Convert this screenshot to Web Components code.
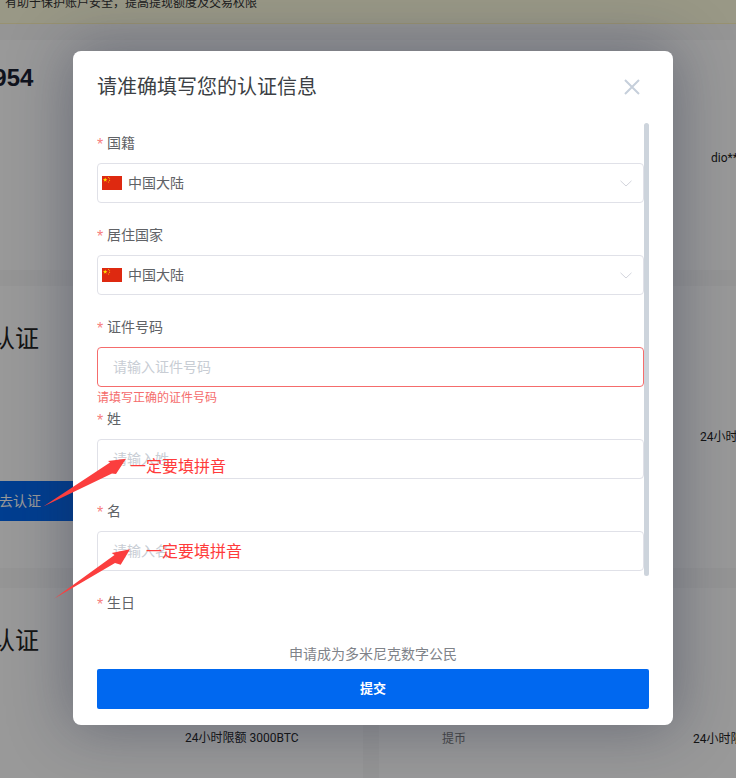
<!DOCTYPE html>
<html lang="zh-CN">
<head>
<meta charset="utf-8">
<title>认证信息</title>
<style>
html,body{margin:0;padding:0;background:#fff}
body{font-family:"Noto Sans CJK SC","Liberation Sans",sans-serif}
</style>
</head>
<body>
<kyc-page>
  <bg-banner slot="bg">有助于保护账户安全，提高提现额度及交易权限</bg-banner>
  <bg-rows slot="bg"></bg-rows>
  <kyc-modal slot="modal" heading="请准确填写您的认证信息">
    <form-field label="国籍"><flag-select value="中国大陆"></flag-select></form-field>
    <form-field label="居住国家"><flag-select value="中国大陆"></flag-select></form-field>
    <form-field label="证件号码" error="请填写正确的证件号码"><text-box placeholder="请输入证件号码" invalid></text-box></form-field>
    <form-field label="姓"><text-box placeholder="请输入姓"></text-box></form-field>
    <form-field label="名"><text-box placeholder="请输入名"></text-box></form-field>
    <form-field label="生日"></form-field>
    <span slot="note">申请成为多米尼克数字公民</span>
    <span slot="submit">提交</span>
  </kyc-modal>
  <red-note slot="marks" style="left:130px;top:453px">一定要填拼音</red-note>
  <red-note slot="marks" style="left:146px;top:538px">一定要填拼音</red-note>
  <red-arrows slot="marks"></red-arrows>
</kyc-page>
<script>
function make(name, html){
  customElements.define(name, class extends HTMLElement{
    constructor(){
      super();
      this.attachShadow({mode:'open'}).innerHTML = typeof html==='function' ? html(this) : html;
    }
    connectedCallback(){
      if(typeof html==='function') this.shadowRoot.innerHTML = html(this);
    }
  });
}
make('kyc-page', `<style>
:host{display:block;position:relative;width:736px;height:778px;overflow:hidden;background:#f8f8f9}
.scrim{position:absolute;inset:0;background:rgba(0,0,0,.4);display:flex;align-items:flex-start;padding:51px 63px 0 73px;box-sizing:border-box}
</style>
<slot name="bg"></slot>
<div class="scrim"><slot name="modal"></slot></div>
<slot name="marks"></slot>`);

make('bg-banner', `<style>
:host{display:block;height:23px;border-bottom:1px solid #fdf3bd;background:#fffde0;color:#333;font:12px/16px "Roboto","Noto Sans CJK SC",sans-serif;overflow:hidden;white-space:nowrap}
div{padding-left:5px;margin-top:-5px}
</style><div><slot></slot></div>`);

make('bg-rows', `<style>
:host{display:block;font:12px/16px "Roboto","Noto Sans CJK SC",sans-serif;color:#222;white-space:nowrap}
.row{background:#fff;overflow:hidden}
.r1{margin-top:16px;height:66px;box-sizing:border-box;padding:26px 0 0 0}
.num{font:700 24px/24px "Liberation Sans",sans-serif;color:#1b2233;margin-left:-20px}
.r2{height:164px;padding-left:711px;box-sizing:border-box;padding-top:44px}
.r3{margin-top:16px;height:282px;display:grid;grid-template-columns:379px 1fr}
.big{font-size:24px;line-height:32px;margin-left:-9px;color:#222}
.r3 .big{margin-top:37px}
.btn{margin:126px 0 0 -20px;height:40px;width:120px;background:#0068f0;color:#fff;font-size:14px;line-height:40px;padding-left:19px;box-sizing:border-box}
.r3 .right{padding:143px 0 0 321px}
.r4{margin-top:20px;height:190px;display:grid;grid-template-columns:363px 1fr;column-gap:16px;background:none}
.card{background:#fff;overflow:hidden;position:relative}
.r4 .big{margin-top:37px}
.r4 .limit{margin:73px 0 0 185px}
.r4 .right{padding:143px 0 0 63px;display:flex}
.grey{color:#777;width:251px;flex:none}
.r4 .right span:last-child{flex:none}
</style>
<div class="row r1"><div class="num">1954</div></div>
<div class="row r2">dio**</div>
<div class="row r3"><div><div class="big">认证</div><div class="btn">去认证</div></div><div class="right">24小时</div></div>
<div class="r4"><div class="card"><div class="big">认证</div><div class="limit">24小时限额 3000BTC</div></div><div class="card right"><span class="grey">提币</span><span>24小时限额</span></div></div>`);

make('kyc-modal', el=>`<style>
:host{display:flex;flex-direction:column;position:relative;width:600px;height:674px;flex:none;background:#fff;border-radius:8px;box-shadow:0 0 60px 4px rgba(30,38,66,.38);box-sizing:border-box;padding:0 24px 16px;overflow:visible}
header{height:72px;flex:none;display:flex;align-items:center;justify-content:space-between;padding-bottom:2px;box-sizing:border-box}
h2{margin:0;font:400 20px/28px "Noto Sans CJK SC",sans-serif;color:#3c3f44}
svg{display:block;margin:2px 9px 0 0}
.body{height:517px;flex:none;overflow:hidden;width:547px}
.thumb{position:absolute;left:571px;top:72px;width:5px;height:453px;border-radius:3px;background:#cdd4dc}
.note{flex:none;margin-top:3px;text-align:center;font:14px/20px "Noto Sans CJK SC",sans-serif;color:#7f8389;height:20px}
.submit{flex:none;margin-top:6px;height:40px;border-radius:2px;background:#0068f0;color:#fff;text-align:center;font:700 13px/38px "Noto Sans CJK SC",sans-serif}
</style>
<header><h2>${el.getAttribute('heading')||''}</h2>
<svg width="16" height="16" viewBox="0 0 16 16" fill="none" stroke="#c6cfdb" stroke-width="2"><path d="M1 1l14 14M15 1L1 15"/></svg></header>
<div class="body"><slot></slot></div>
<div class="thumb"></div>
<div class="note"><slot name="note"></slot></div>
<div class="submit"><slot name="submit"></slot></div>`);

make('form-field', el=>{
  const err=el.getAttribute('error');
  return `<style>
:host{display:block;height:92px;font:14px/38px "Noto Sans CJK SC",sans-serif}
.lab{height:40px;color:#606266;white-space:nowrap}
.lab i{display:inline-block;width:10px;font-style:normal;font-size:16px;color:#f77f7f;font-family:"Liberation Sans",sans-serif;vertical-align:-2px}
.err{height:12px;box-sizing:border-box;padding-top:4px;font-size:12px;line-height:12px;color:#f56c6c}
</style><div class="lab"><i>*</i>${el.getAttribute('label')||''}</div><slot></slot>${err?`<div class="err">${err}</div>`:''}`;
});

make('flag-select', el=>`<style>
:host{display:flex;align-items:center;height:40px;box-sizing:border-box;border:1px solid #e0e1e8;border-radius:4px;padding:0 11px 0 4px;color:#606266;font:14px/36px "Noto Sans CJK SC",sans-serif}
.flag{display:block;flex:none;margin-right:6px}
span{flex:1;height:38px}
</style>
<svg class="flag" width="20" height="14" viewBox="0 0 20 14"><rect width="20" height="14" fill="#de2910"/><path d="M3.2 1.4l.6 1.7h1.7l-1.4 1 .5 1.700-1.4-1-1.4 1 .5-1.700-1.400-1h1.700z" fill="#ffde00"/><g fill="#ffde00"><circle cx="6.600" cy="1.400" r=".5"/><circle cx="7.600" cy="2.800" r=".5"/><circle cx="7.600" cy="4.600" r=".5"/><circle cx="6.600" cy="6" r=".5"/></g></svg>
<span>${el.getAttribute('value')||''}</span>
<svg width="12" height="7" viewBox="0 0 12 7" fill="none" stroke="#d2d4dc" stroke-width="1"><path d="M.5.8L6 6l5.500-5.200"/></svg>`);

make('text-box', el=>`<style>
:host{display:block;height:40px;box-sizing:border-box;border:1px solid ${el.hasAttribute('invalid')?'#f56c6c':'#e0e1e8'};border-radius:4px;padding-left:15px;color:#c8cdd4;font:14px/36px "Noto Sans CJK SC",sans-serif}
</style>${el.getAttribute('placeholder')||''}`);

make('red-note', `<style>
:host{position:absolute;display:block;font:16px/24px "Noto Sans CJK SC",sans-serif;color:#ff3b3b;white-space:nowrap}
</style><slot></slot>`);

make('red-arrows', `<style>
:host{position:absolute;left:0;top:0;display:block;width:736px;height:778px;pointer-events:none}
svg{display:block}
</style><svg width="736" height="778" viewBox="0 0 736 778" fill="#fb3e3e">
<path d="M43.300 506.500L110 462.500L108 461L126 458.700L116 474L112 473.500Z"/>
<path d="M54 598.700L114.500 555L111.700 553L130 549.300L120.700 564.700L115 563Z"/>
</svg>`);
</script>
</body>
</html>
